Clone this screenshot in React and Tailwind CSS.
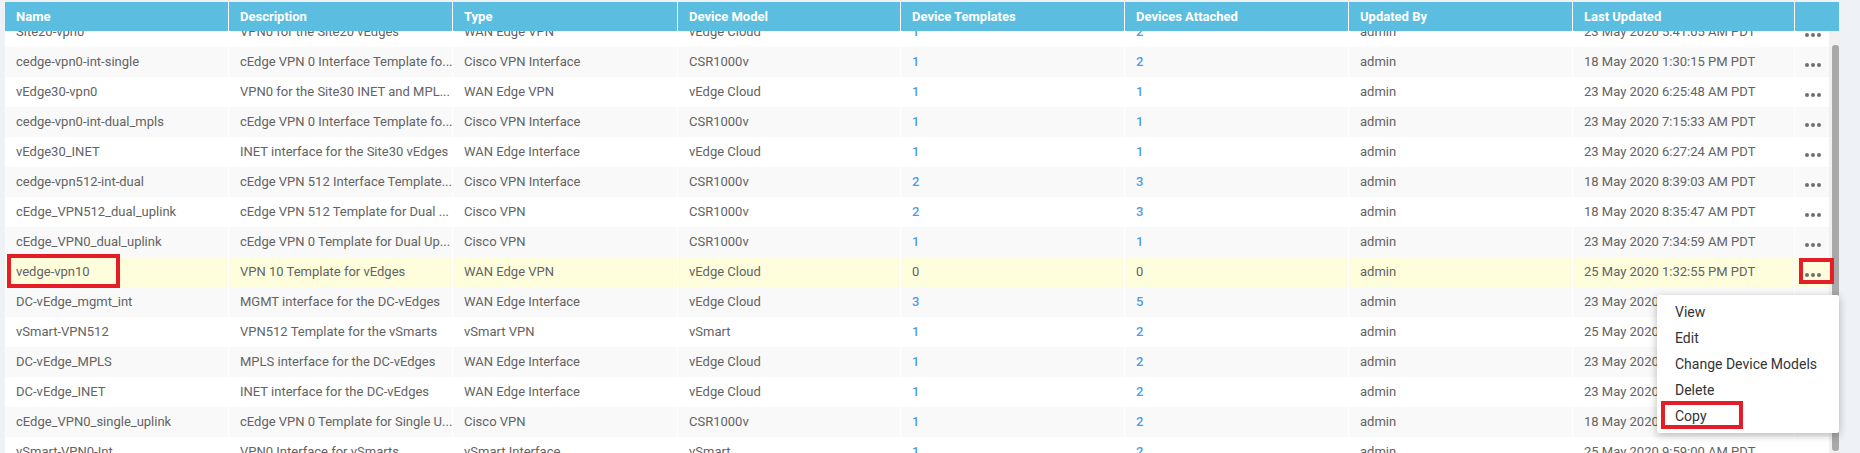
import React from "react";

const headers = ["Name", "Description", "Type", "Device Model", "Device Templates", "Devices Attached", "Updated By", "Last Updated", ""];

const rows = [
  ["Site20-vpn0", "VPN0 for the Site20 vEdges", "WAN Edge VPN", "vEdge Cloud", "1", "2", "23 May 2020 5:41:05 AM PDT"],
  ["cedge-vpn0-int-single", "cEdge VPN 0 Interface Template fo...", "Cisco VPN Interface", "CSR1000v", "1", "2", "18 May 2020 1:30:15 PM PDT"],
  ["vEdge30-vpn0", "VPN0 for the Site30 INET and MPL...", "WAN Edge VPN", "vEdge Cloud", "1", "1", "23 May 2020 6:25:48 AM PDT"],
  ["cedge-vpn0-int-dual_mpls", "cEdge VPN 0 Interface Template fo...", "Cisco VPN Interface", "CSR1000v", "1", "1", "23 May 2020 7:15:33 AM PDT"],
  ["vEdge30_INET", "INET interface for the Site30 vEdges", "WAN Edge Interface", "vEdge Cloud", "1", "1", "23 May 2020 6:27:24 AM PDT"],
  ["cedge-vpn512-int-dual", "cEdge VPN 512 Interface Template...", "Cisco VPN Interface", "CSR1000v", "2", "3", "18 May 2020 8:39:03 AM PDT"],
  ["cEdge_VPN512_dual_uplink", "cEdge VPN 512 Template for Dual ...", "Cisco VPN", "CSR1000v", "2", "3", "18 May 2020 8:35:47 AM PDT"],
  ["cEdge_VPN0_dual_uplink", "cEdge VPN 0 Template for Dual Up...", "Cisco VPN", "CSR1000v", "1", "1", "23 May 2020 7:34:59 AM PDT"],
  ["vedge-vpn10", "VPN 10 Template for vEdges", "WAN Edge VPN", "vEdge Cloud", "0", "0", "25 May 2020 1:32:55 PM PDT"],
  ["DC-vEdge_mgmt_int", "MGMT interface for the DC-vEdges", "WAN Edge Interface", "vEdge Cloud", "3", "5", "23 May 2020 6:02:11 AM PDT"],
  ["vSmart-VPN512", "VPN512 Template for the vSmarts", "vSmart VPN", "vSmart", "1", "2", "25 May 2020 9:57:40 AM PDT"],
  ["DC-vEdge_MPLS", "MPLS interface for the DC-vEdges", "WAN Edge Interface", "vEdge Cloud", "1", "2", "23 May 2020 6:04:29 AM PDT"],
  ["DC-vEdge_INET", "INET interface for the DC-vEdges", "WAN Edge Interface", "vEdge Cloud", "1", "2", "23 May 2020 6:03:52 AM PDT"],
  ["cEdge_VPN0_single_uplink", "cEdge VPN 0 Template for Single U...", "Cisco VPN", "CSR1000v", "1", "2", "18 May 2020 8:31:20 AM PDT"],
  ["vSmart-VPN0-Int", "VPN0 Interface for vSmarts", "vSmart Interface", "vSmart", "1", "2", "25 May 2020 9:59:00 AM PDT"],
];

const cols = "grid grid-cols-[224px_224px_225px_223px_224px_224px_224px_222px_1fr]";

function Count({ value }) {
  if (value === "0") return <span>0</span>;
  return <span className="font-medium text-[#4f9de6]">{value}</span>;
}

function Dots() {
  return (
    <div className="mt-[5px] flex gap-[2px]">
      <div className="h-[4px] w-[4px] rounded-full bg-[#6f6f6f]"></div>
      <div className="h-[4px] w-[4px] rounded-full bg-[#6f6f6f]"></div>
      <div className="h-[4px] w-[4px] rounded-full bg-[#6f6f6f]"></div>
    </div>
  );
}

export default function App() {
  return (
    <div className="relative h-[453px] w-full overflow-hidden bg-[#eef1f6] pl-[5px] pr-[21px] pt-[2px] font-['Roboto',sans-serif]">
      <div className={`${cols} h-[29px] bg-[#5bbee0] text-[13px] font-bold text-white`}>
        {headers.map((h, i) => (
          <div key={i} className={`flex items-center px-[11px] ${i < headers.length - 1 ? "border-r border-white" : ""}`}>
            {h}
          </div>
        ))}
      </div>

      <div className="flex h-[422px]">
        <div className="flex-1 overflow-hidden bg-white">
          <div className="-mt-[14px]">
            {rows.map((r, idx) => {
              const bg = idx === 8 ? "bg-[#fefedd]" : idx % 2 === 1 ? "bg-[#f9f9f9]" : "bg-white";
              return (
                <div key={idx} className={`${cols} h-[30px] text-[13px] text-[#636363] ${bg}`}>
                  <div className="flex items-center truncate border-r border-white px-[11px]">{r[0]}</div>
                  <div className="flex items-center truncate border-r border-white px-[11px]">{r[1]}</div>
                  <div className="flex items-center truncate border-r border-white px-[11px]">{r[2]}</div>
                  <div className="flex items-center truncate border-r border-white px-[11px]">{r[3]}</div>
                  <div className="flex items-center border-r border-white px-[11px]"><Count value={r[4]} /></div>
                  <div className="flex items-center border-r border-white px-[11px]"><Count value={r[5]} /></div>
                  <div className="flex items-center border-r border-white px-[11px]">admin</div>
                  <div className="flex items-center truncate border-r border-white px-[11px]">{r[6]}</div>
                  <div className="flex items-center justify-center pl-[2px]"><Dots /></div>
                </div>
              );
            })}
          </div>
        </div>
        <div className="w-[10px] bg-[#f1f1f1] pb-[2px] pl-[3px] pt-[14px]">
          <div className="h-full w-[7px] rounded-[3px] bg-[#a9a9a9]"></div>
        </div>
      </div>

      {/* action menu */}
      <div className="absolute left-[1657px] top-[295px] w-[182px] rounded-[2px] bg-white py-[4px] text-[14px] text-[#333] shadow-[0_2px_8px_rgba(0,0,0,0.28)]">
        {["View", "Edit", "Change Device Models", "Delete", "Copy"].map((item) => (
          <div key={item} className="flex h-[26px] items-center whitespace-nowrap pl-[18px]">{item}</div>
        ))}
      </div>

      {/* annotation boxes */}
      <div className="absolute left-[7px] top-[254px] h-[34px] w-[113px] border-4 border-[#e51d26]"></div>
      <div className="absolute left-[1799px] top-[258px] h-[26px] w-[35px] border-4 border-[#e51d26]"></div>
      <div className="absolute left-[1661px] top-[401px] h-[28px] w-[82px] border-4 border-[#e51d26]"></div>
    </div>
  );
}
